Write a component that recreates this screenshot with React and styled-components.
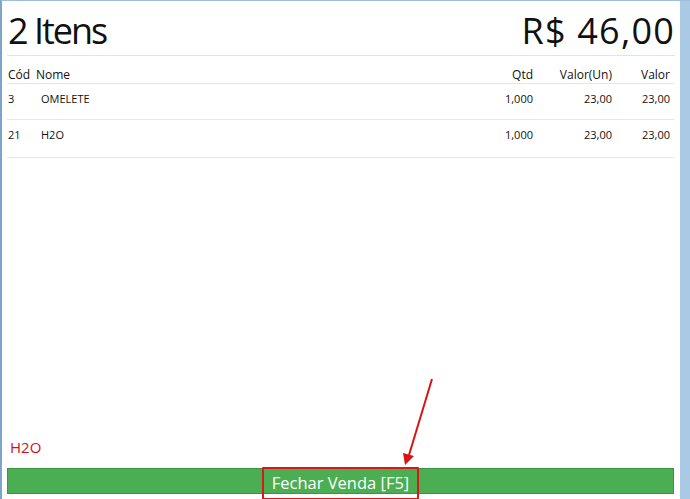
import React from "react";
import styled, { createGlobalStyle } from "styled-components";

const Global = createGlobalStyle`
  html, body { margin: 0; padding: 0; background: #ffffff; }
  body { font-family: "Open Sans", "Noto Sans", sans-serif; }
`;

const Frame = styled.div`
  position: relative;
  width: 690px;
  height: 499px;
  display: flex;
  box-sizing: border-box;
  border-left: 2px solid #7ea4c8;
  border-top: 1px solid #9dbcd9;
  overflow: hidden;
`;

const Panel = styled.div`
  flex: 1;
  display: flex;
  flex-direction: column;
  background: #ffffff;
  padding: 0 6px 5px 5px;
  min-width: 0;
`;

const SideStrip = styled.div`
  width: 10px;
  background: #a9c9e4;
`;

const Header = styled.div`
  display: flex;
  justify-content: space-between;
  align-items: center;
  height: 54px;
  border-bottom: 1px solid #e3e3e3;
  padding: 0 0 0 1px;
  margin-right: -1px;
`;

const BigText = styled.div`
  font-size: 36px;
  color: #111;
  line-height: 1;
  letter-spacing: ${(p) => p.$ls}px;
  padding-top: 5px;
`;

const Row = styled.div`
  display: grid;
  grid-template-columns: ${(p) => (p.$head ? "28px" : "33px")} 1fr 80px 79px 58px;
  height: ${(p) => p.$h}px;
  align-items: ${(p) => (p.$head ? "end" : "start")};
  border-bottom: 1px solid #e6e6e6;
  box-sizing: border-box;
  padding: ${(p) => (p.$head ? "0 4px 0 1px" : "7px 4px 0 1px")};
  color: #111;
`;

const Cell = styled.div`
  text-align: ${(p) => (p.$right ? "right" : "left")};
  white-space: nowrap;
  font-size: ${(p) => (p.$head ? "12px" : "11px")};
`;

const Spacer = styled.div`
  flex: 1;
`;

const Status = styled.div`
  color: #d20f0f;
  font-size: 15px;
  padding-left: 3px;
  margin-bottom: 11px;
`;

const Bar = styled.div`
  height: 26px;
  background: #4cae52;
  border: 1px solid #3a9640;
  box-sizing: border-box;
  display: flex;
  justify-content: center;
  align-items: center;
`;

const CloseButton = styled.div`
  color: #ffffff;
  font-size: 16.5px;
  padding: 2px 8px 3px 8px;
  margin-top: 4px;
  border: 2px solid #d61a1a;
  border-radius: 1px;
  white-space: nowrap;
  line-height: 24px;
`;

const Arrow = styled.svg`
  position: absolute;
  left: 390px;
  top: 370px;
  width: 50px;
  height: 100px;
  pointer-events: none;
`;

const items = [
  { cod: "3", nome: "OMELETE", qtd: "1,000", un: "23,00", valor: "23,00", h: 36 },
  { cod: "21", nome: "H2O", qtd: "1,000", un: "23,00", valor: "23,00", h: 38 },
];

export default function App() {
  return (
    <>
      <Global />
      <Frame>
        <Panel>
          <Header>
            <BigText $ls={-2}>2 Itens</BigText>
            <BigText $ls={1.2}>R$ 46,00</BigText>
          </Header>
          <Row $head $h={28}>
            <Cell $head>Cód</Cell>
            <Cell $head>Nome</Cell>
            <Cell $head $right>Qtd</Cell>
            <Cell $head $right>Valor(Un)</Cell>
            <Cell $head $right>Valor</Cell>
          </Row>
          {items.map((it) => (
            <Row key={it.cod} $h={it.h}>
              <Cell>{it.cod}</Cell>
              <Cell>{it.nome}</Cell>
              <Cell $right>{it.qtd}</Cell>
              <Cell $right>{it.un}</Cell>
              <Cell $right>{it.valor}</Cell>
            </Row>
          ))}
          <Spacer />
          <Status>H2O</Status>
          <Bar>
            <CloseButton>Fechar Venda [F5]</CloseButton>
          </Bar>
        </Panel>
        <SideStrip />
        <Arrow viewBox="0 0 50 100">
          <line x1="40" y1="8" x2="17" y2="84" stroke="#d81414" strokeWidth="2" />
          <polygon points="13,94 11,82 22,85" fill="#d81414" />
        </Arrow>
      </Frame>
    </>
  );
}
